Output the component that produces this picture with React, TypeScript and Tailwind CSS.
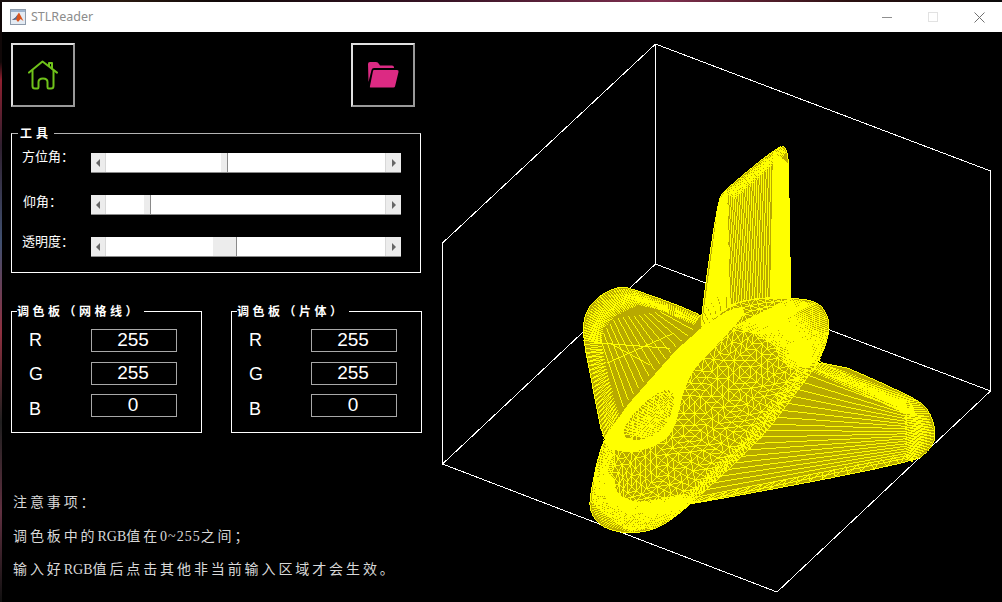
import * as React from 'react';

type P = [number, number];

// --- mesh helpers (coordinates are in 3x space, origin 560,130) ---
const resample = (line: P[], n: number): P[] => {
  const lens = [0];
  for (let i = 1; i < line.length; i++) {
    lens.push(lens[i - 1] + Math.hypot(line[i][0] - line[i - 1][0], line[i][1] - line[i - 1][1]));
  }
  const total = lens[lens.length - 1];
  const out: P[] = [];
  for (let k = 0; k < n; k++) {
    const d = (total * k) / (n - 1);
    let i = 1;
    while (i < line.length - 1 && lens[i] < d) i++;
    const t = (d - lens[i - 1]) / (lens[i] - lens[i - 1] || 1);
    out.push([
      line[i - 1][0] + (line[i][0] - line[i - 1][0]) * t,
      line[i - 1][1] + (line[i][1] - line[i - 1][1]) * t,
    ]);
  }
  return out;
};

const fmt = (p: P) => `${p[0].toFixed(1)} ${p[1].toFixed(1)}`;

const ruled = (a: P[], b: P[], n: number, zig = true) => {
  const ra = resample(a, n);
  const rb = resample(b, n);
  let d = '';
  for (let i = 0; i < n; i++) {
    d += `M${fmt(ra[i])}L${fmt(rb[i])}`;
    if (zig && i < n - 1) d += `L${fmt(ra[i + 1])}`;
  }
  return d;
};

// round off a closed outline (corner cutting, two passes)
const smooth = (pts: P[]): P[] => {
  let cur = pts;
  for (let pass = 0; pass < 2; pass++) {
    const next: P[] = [];
    cur.forEach((p, i) => {
      const q = cur[(i + 1) % cur.length];
      next.push([p[0] * 0.75 + q[0] * 0.25, p[1] * 0.75 + q[1] * 0.25]);
      next.push([p[0] * 0.25 + q[0] * 0.75, p[1] * 0.25 + q[1] * 0.75]);
    });
    cur = next;
  }
  return cur;
};

const poly = (pts: P[]) => `M${pts.map(fmt).join('L')}Z`;

const jitter = (i: number) => {
  const v = Math.sin(i * 12.9898) * 43758.5453;
  return v - Math.floor(v) - 0.5;
};

// tube lattice between two edges, rings bowed along the tube
const lattice = (a: P[], b: P[], stations: number, levels: number) => {
  const ra = resample(a, stations);
  const rb = resample(b, stations);
  const at = (i: number, s: number): P => {
    const f = Math.max(0, Math.min(stations - 1.001, i + 1.6 * Math.sin(Math.PI * s)));
    const k = Math.floor(f);
    const t = f - k;
    const pa: P = [ra[k][0] + (ra[k + 1][0] - ra[k][0]) * t, ra[k][1] + (ra[k + 1][1] - ra[k][1]) * t];
    const pb: P = [rb[k][0] + (rb[k + 1][0] - rb[k][0]) * t, rb[k][1] + (rb[k + 1][1] - rb[k][1]) * t];
    return [pa[0] + (pb[0] - pa[0]) * s, pa[1] + (pb[1] - pa[1]) * s];
  };
  let d = '';
  for (let l = 0; l < levels; l++) {
    const s = l / levels;
    const s2 = (l + 1) / levels;
    for (let i = 0; i < stations - 1; i++) {
      d += `M${fmt(at(i, s))}L${fmt(at(i + 1, s))}`;
      d += `M${fmt(at(i, s))}L${fmt(at(i, s2))}`;
      const off = jitter(i * 31 + l) > 0 ? 1 : 0;
      d += `M${fmt(at(i + off, s))}L${fmt(at(i + 1 - off, s2))}`;
    }
  }
  return d;
};

// outlines run on under the tube, so the rounded corners stay hidden
const rightLobe = smooth([[740, 660], [1070, 805], [1110, 845], [1130, 915], [1110, 960], [1060, 997], [380, 1126], [300, 1130], [520, 860]]);
const leftLobe = smooth([[68, 620], [75, 545], [120, 495], [175, 470], [215, 475], [450, 562], [520, 640], [200, 880], [135, 960], [100, 780]]);
const fin = smooth([[662, 42], [682, 62], [686, 110], [688, 300], [696, 640], [410, 680], [445, 400], [476, 208], [492, 182]]);
const tube = smooth([[690, 503], [775, 515], [805, 560], [808, 610], [780, 690], [700, 800], [600, 930], [395, 1120], [330, 1172], [280, 1200], [200, 1212], [120, 1190], [88, 1140], [92, 1090], [110, 1000], [130, 935], [200, 830], [350, 660], [430, 590], [520, 520], [600, 503]]);

const tubeUpper: P[] = [[690, 507], [600, 505], [520, 520], [430, 590], [350, 660], [200, 830], [130, 935], [110, 1000], [95, 1120]];
const tubeLower: P[] = [[805, 610], [780, 690], [700, 800], [600, 930], [395, 1120], [330, 1170], [280, 1195], [210, 1207]];

const ring = smooth([[130, 935], [200, 830], [350, 660], [430, 590], [520, 530], [565, 540], [500, 615], [400, 715], [365, 800], [345, 900], [290, 950], [210, 968], [150, 958]]);
const ringHole = smooth([[180, 910], [235, 830], [320, 770], [350, 800], [322, 885], [270, 925], [210, 932]]);

const meshPaths: string[] = [
  // right lobe
  ruled([[770, 690], [620, 880], [395, 1120]], [[1040, 830], [1040, 880], [1040, 960], [1035, 985]], 22, false),
  ruled([[770, 690], [1070, 810], [1105, 850], [1125, 910], [1110, 950], [1060, 995]], [[750, 722], [1030, 850], [1036, 880], [1036, 920], [1036, 960], [1030, 985]], 62),
  ruled([[1060, 995], [395, 1120]], [[1036, 972], [430, 1100]], 18),
  // left lobe
  ruled([[70, 630], [70, 600], [85, 545], [120, 500], [170, 475], [210, 478], [420, 556]], [[125, 640], [130, 595], [170, 555], [235, 525], [300, 540], [400, 585]], 62),
  ruled([[70, 630], [100, 780], [130, 930]], [[125, 640], [150, 760], [178, 860]], 24),
  ruled([[120, 620], [165, 565], [300, 545]], [[190, 830], [260, 745], [400, 600]], 14, false),
  'M130 640L330 655M150 640L270 705M140 700L340 610',
  // fin
  ruled([[478, 210], [495, 185], [640, 70]], [[425, 600], [630, 570]], 26, false),
  ruled([[478, 210], [500, 180]], [[425, 600], [510, 588]], 22),
  ruled([[640, 65], [685, 100]], [[632, 570], [692, 560]], 34),
  ruled([[495, 185], [660, 48]], [[525, 205], [680, 70]], 40),
  // tube
  lattice(tubeUpper, tubeLower, 38, 15),
  ruled([[690, 507], [770, 520], [800, 560], [805, 610], [780, 690]], [[520, 590], [600, 620], [640, 650], [660, 680], [690, 720]], 46),
  ruled([[780, 690], [700, 800], [600, 930], [395, 1120]], [[735, 680], [655, 790], [550, 925], [385, 1085]], 54),
  ruled([[110, 1000], [95, 1100], [95, 1140], [130, 1185], [210, 1207], [280, 1195], [330, 1170], [395, 1120]], [[165, 1050], [170, 1085], [190, 1105], [230, 1115], [280, 1110], [330, 1100], [370, 1090], [400, 1100]], 66),
  ruled([[130, 935], [110, 1000], [95, 1100]], [[165, 965], [155, 1040], [170, 1085]], 22),
  ruled([[180, 910], [235, 830], [320, 770]], [[270, 925], [322, 885], [350, 800]], 22),
];

const shape = (pts: P[]) => <path d={poly(pts)} fill="#b8a900" />;

const StlMesh = () => (
  <g transform="translate(560 130) scale(0.33333)" shapeRendering="crispEdges" fill="none" stroke="#ffff00" strokeWidth={3}>
    {shape(rightLobe)}
    {meshPaths.slice(0, 3).map((d, i) => <path key={i} d={d} />)}
    {shape(leftLobe)}
    {meshPaths.slice(3, 7).map((d, i) => <path key={i} d={d} />)}
    {shape(fin)}
    {meshPaths.slice(7, 11).map((d, i) => <path key={i} d={d} />)}
    {shape(tube)}
    {meshPaths.slice(11).map((d, i) => <path key={i} d={d} />)}
    <path d={`${poly(ring)}${poly(ringHole)}`} fill="#ffff00" fillRule="evenodd" stroke="none" />
  </g>
);

const PlotBox = () => (
  <svg className="h-[570px] w-[572px] shrink-0" viewBox="430 32 572 570" shapeRendering="crispEdges">
    <path
      d="M655.5 44L655.5 264M990.5 171L990.5 391M442.5 243L442.5 464M655.5 44L990.5 171M655.5 44L442.5 243M655.5 264L990.5 391M655.5 264L442.5 464M442.5 464L777 592L990.5 391"
      stroke="#ffffff"
      strokeWidth={1}
      fill="none"
    />
    <StlMesh />
  </svg>
);

const MatlabIcon = () => (
  <svg width="16" height="16" viewBox="0 0 16 16">
    <rect x="0.5" y="0.5" width="15" height="15" fill="#e4ebf3" stroke="#8e9bab" />
    <rect x="1" y="1" width="14" height="2" fill="#9db4cf" />
    <path d="M2 11L5.5 8.5L9 3.5L13.5 12L10.5 10L8 13L6 10.5Z" fill="#d9541e" />
    <path d="M2 11L5.5 8.5L7.5 6L6 10.5Z" fill="#3f6ea6" />
  </svg>
);

const HomeIcon = () => (
  <svg width="30" height="30" viewBox="0 0 30 30" fill="none" stroke="#6fc21a" strokeWidth={2} strokeLinecap="round" strokeLinejoin="round">
    <path d="M1 12.6L14.5 1.5L29 12.6" />
    <path d="M21 6V3H24V8.4" />
    <path d="M4.5 10.5V26Q4.5 28.5 7 28.5H9.5Q10.5 28.5 10.5 27V22Q10.5 18.5 15 18.5Q19.5 18.5 19.5 22V27Q19.5 28.5 20.5 28.5H23Q25.5 28.5 25.5 26V10.5" />
  </svg>
);

const FolderIcon = () => (
  <svg width="32" height="28" viewBox="0 0 32 28">
    <path d="M1 3Q1 1 3 1H9Q11 1 12 3L13 4.5H25Q27 4.5 27 6.5V7H7Q5 7 4.5 9L1.5 21Z" fill="#dc2a83" />
    <path d="M7 9H30Q32 9 31.5 11L28 25.5Q27.7 26.5 26.5 26.5H3.5Q2.5 26.5 3 25L6 10Q6.2 9 7 9Z" fill="#dc2a83" />
  </svg>
);

const IconButton = ({ children }: { children: React.ReactNode }) => (
  <button className="flex h-16 w-16 items-center justify-center border-2 border-t-[#e0e0e0] border-l-[#e0e0e0] border-r-[#9a9a9a] border-b-[#9a9a9a] bg-black">
    {children}
  </button>
);

const Legend = ({ children, className }: { children: React.ReactNode; className: string }) => (
  <span className={`absolute -top-[9px] bg-black text-[12px] leading-[16px] font-bold text-white font-['Noto_Sans_CJK_SC',sans-serif] ${className}`}>
    {children}
  </span>
);

const Slider = ({ pos, thumb }: { pos: number; thumb: number }) => (
  <div className="flex h-5 w-[310px] border-b border-[#8a8a8a] bg-white">
    <div className="flex w-[15px] items-center justify-center border-r border-[#d8d8d8] bg-[#ececec]">
      <div className="h-0 w-0 border-y-[4px] border-r-[4px] border-y-transparent border-r-[#666]" />
    </div>
    <div className="flex-1">
      <div className="h-full border-r border-[#8a8a8a] bg-[#ececec]" style={{ marginLeft: pos, width: thumb }} />
    </div>
    <div className="flex w-[16px] items-center justify-center border-l border-[#d8d8d8] bg-[#ececec]">
      <div className="h-0 w-0 border-y-[4px] border-l-[4px] border-y-transparent border-l-[#666]" />
    </div>
  </div>
);

const sliders = [
  { label: '方位角：', pos: 115, thumb: 7, labelClass: '-mt-[7px]' },
  { label: '仰角：', pos: 38, thumb: 7, labelClass: '-mt-[4px] pl-[1px]' },
  { label: '透明度：', pos: 107, thumb: 24, labelClass: '-mt-[6px]' },
];

const ColorRow = ({ name, value, rowClass, labelClass }: { name: string; value: string; rowClass: string; labelClass: string }) => (
  <div className={`flex h-[23px] items-center ${rowClass}`}>
    <span className={`w-[62px] text-[18px] text-white ${labelClass}`}>{name}</span>
    <div className="flex h-[23px] w-[86px] items-center justify-center border border-[#a8a8a8] pr-[2px] text-[19px] text-white">
      {value}
    </div>
  </div>
);

const Palette = ({ title }: { title: string }) => (
  <div className="relative h-[122px] w-[191px] border border-white pt-[17px] pl-[17px] font-['Liberation_Sans',sans-serif]">
    <Legend className="left-[5px] pr-[3px] tracking-[3.5px]">{title}</Legend>
    <ColorRow name="R" value="255" rowClass="" labelClass="-mt-[1px]" />
    <ColorRow name="G" value="255" rowClass="mt-[10px]" labelClass="mt-[1px]" />
    <ColorRow name="B" value="0" rowClass="mt-[9px]" labelClass="mt-[8px]" />
  </div>
);

export default function App() {
  return (
    <div className="flex h-[602px] w-[1002px] flex-col overflow-hidden bg-black">
      <div className="h-[2px] w-full bg-[linear-gradient(90deg,#1a1010_0%,#2a1a10_12%,#100808_22%,#3a1426_45%,#803050_66%,#5a2030_75%,#2a1010_85%,#0a0a0a_100%)]" />
      <div className="flex min-h-0 flex-1">
        <div className="w-[2px] bg-[linear-gradient(180deg,#100808_0%,#100808_10%,#902030_13%,#302030_24%,#405070_40%,#903040_55%,#202020_70%,#603040_85%,#101010_100%)]" />
        <div className="flex min-w-0 flex-1 flex-col">
          {/* title bar */}
          <div className="flex h-[30px] items-center bg-white pl-2">
            <MatlabIcon />
            <span className="ml-[5px] text-[12.5px] text-[#8c8c8c] font-['Noto_Sans',sans-serif]">STLReader</span>
            <div className="ml-auto flex h-full">
              <div className="flex w-[46px] items-center justify-center">
                <div className="h-px w-[10px] bg-[#8f8f8f]" />
              </div>
              <div className="flex w-[46px] items-center justify-center">
                <div className="h-[10px] w-[10px] border border-[#e2e2e2]" />
              </div>
              <div className="flex w-[46px] items-center justify-center">
                <svg width="11" height="11" viewBox="0 0 11 11" stroke="#707070" strokeWidth={1}>
                  <path d="M0.5 0.5L10.5 10.5M10.5 0.5L0.5 10.5" />
                </svg>
              </div>
            </div>
          </div>

          <div className="flex min-h-0 flex-1">
            {/* controls */}
            <div className="w-[428px] shrink-0 pt-[11px] pl-[9px] font-['Noto_Sans_CJK_SC',sans-serif]">
              <div className="flex w-[404px] justify-between">
                <IconButton><HomeIcon /></IconButton>
                <IconButton><FolderIcon /></IconButton>
              </div>

              <div className="relative mt-[26px] h-[140px] w-[410px] border border-white border-t-[#b4b4b4] pt-[19px] pl-[10px]">
                <Legend className="left-[6px] px-[2px] tracking-[4px]">工具</Legend>
                <div className="flex flex-col gap-[22px]">
                  {sliders.map((s) => (
                    <div key={s.label} className="flex h-5">
                      <span className={`h-5 w-[69px] text-[13px] leading-5 text-white ${s.labelClass}`}>{s.label}</span>
                      <Slider pos={s.pos} thumb={s.thumb} />
                    </div>
                  ))}
                </div>
              </div>

              <div className="mt-[38px] flex gap-[29px]">
                <Palette title="调色板（网格线）" />
                <Palette title="调色板（片体）" />
              </div>

              <div className="mt-[53px] ml-[2px] text-[14px] leading-[34px] tracking-[2.9px] whitespace-nowrap text-[#d8d8d8] font-['Liberation_Serif','Noto_Sans_CJK_SC',serif]">
                <p className="h-[34px]">注意事项：</p>
                <p className="h-[33px]">调色板中的<span className="tracking-normal">RGB</span>值在<span className="tracking-[1px]">0~255</span>之间；</p>
                <p className="h-[34px]">输入好<span className="tracking-normal">RGB</span>值后点击其他非当前输入区域才会生效。</p>
              </div>
            </div>

            <PlotBox />
          </div>
        </div>
      </div>
    </div>
  );
}
